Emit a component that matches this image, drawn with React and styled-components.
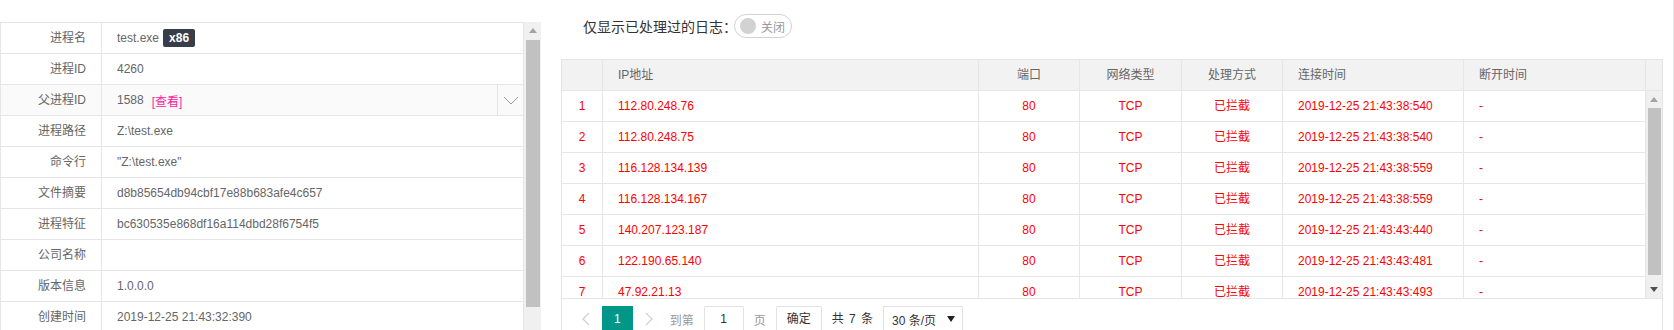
import React from 'react';
import styled, { createGlobalStyle } from 'styled-components';

const GlobalStyle = createGlobalStyle`
  html, body { margin: 0; padding: 0; background: #fff; }
  body {
    font-family: "Liberation Sans", Arial, "Noto Sans CJK SC", sans-serif;
    font-size: 12px;
    color: #666;
  }
  * { box-sizing: border-box; }
`;

const Page = styled.div`
  display: flex;
  align-items: flex-start;
  width: 1674px;
  height: 330px;
  overflow: hidden;
  border-right: 1px solid #e6e6e6;
`;

/* ---------- left info panel ---------- */
const LeftPanel = styled.div`
  display: flex;
  flex-shrink: 0;
  width: 541px;
  margin-top: 22px;
`;

const InfoTable = styled.div`
  width: 524px;
  border: 1px solid #e6e6e6;
  border-bottom: none;
`;

const InfoRow = styled.div`
  display: flex;
  height: 31px;
  border-bottom: 1px solid #e6e6e6;
  background: ${p => (p.$shade ? '#fafafa' : '#fff')};
`;

const InfoLabel = styled.div`
  width: 101px;
  flex-shrink: 0;
  border-right: 1px solid #e6e6e6;
  padding-right: 15px;
  text-align: right;
  line-height: 30px;
  color: #666;
`;

const InfoValue = styled.div`
  flex: 1;
  display: flex;
  align-items: center;
  padding-left: 15px;
  color: #666;
  white-space: pre;
`;

const ExpandCell = styled.div`
  width: 26px;
  flex-shrink: 0;
  border-left: 1px solid #e6e6e6;
  display: flex;
  align-items: center;
  justify-content: center;
`;

const Badge = styled.span`
  display: inline-block;
  height: 18px;
  line-height: 18px;
  padding: 0 6px;
  margin-left: 4px;
  border-radius: 2px;
  background: #393d49;
  color: #fff;
  font-size: 12px;
  font-weight: bold;
`;

const LinkText = styled.span`
  color: #ff1d9c;
  margin-left: 8px;
`;

/* ---------- fake scrollbars ---------- */
const ScrollTrack = styled.div`
  display: flex;
  flex-direction: column;
  flex-shrink: 0;
  width: ${p => p.$w}px;
  height: ${p => p.$h}px;
  background: #f0f0f0;
`;

const ScrollBtn = styled.div`
  height: 17px;
  flex-shrink: 0;
  display: flex;
  align-items: center;
  justify-content: center;
`;

const ScrollThumb = styled.div`
  height: ${p => p.$h}px;
  margin: ${p => p.$top}px 1px 0 2px;
  background: #c1c1c1;
  flex-shrink: 0;
`;

const Spacer = styled.div`
  flex: 1;
`;

const Tri = ({ up, color }) => (
  <svg width="8" height="5" viewBox="0 0 8 5">
    <polygon points={up ? '0,5 8,5 4,0' : '0,0 8,0 4,5'} fill={color} />
  </svg>
);

/* ---------- right panel ---------- */
const RightPanel = styled.div`
  display: flex;
  flex-direction: column;
  flex-shrink: 0;
  width: 1102px;
  margin-left: 20px;
`;

const FilterBar = styled.div`
  display: flex;
  align-items: center;
  height: 52px;
  padding-left: 22px;
  margin-bottom: 7px;
  font-size: 14px;
  color: #333;
`;

const Switch = styled.div`
  display: inline-flex;
  align-items: center;
  height: 24px;
  margin-left: -3px;
  padding: 0 5px;
  border: 1px solid #d2d2d2;
  border-radius: 20px;
  background: #fff;
`;

const Knob = styled.span`
  width: 16px;
  height: 16px;
  border-radius: 50%;
  background: #d2d2d2;
`;

const SwitchText = styled.span`
  width: 25px;
  margin-left: 5px;
  font-size: 12px;
  color: #999;
`;

const TableBox = styled.div`
  border: 1px solid #e6e6e6;
  width: 1102px;
`;

const COLS = '41px 376px 101px 102px 101px 181px 182px';

const HeadRow = styled.div`
  display: grid;
  grid-template-columns: ${COLS} 16px;
  height: 31px;
  background: #f2f2f2;
  border-bottom: 1px solid #e6e6e6;
`;

const Cell = styled.div`
  border-right: ${p => (p.$last ? 'none' : '1px solid #e6e6e6')};
  padding: 0 15px;
  line-height: 30px;
  text-align: ${p => p.$align || 'left'};
  white-space: nowrap;
  overflow: hidden;
`;

const HeadCell = styled(Cell)`
  color: #666;
`;

const BodyCell = styled(Cell)`
  color: #ff0000;
`;

const Body = styled.div`
  display: flex;
  height: 208px;
  border-bottom: 1px solid #e6e6e6;
  overflow: hidden;
`;

const Rows = styled.div`
  width: 1084px;
  flex-shrink: 0;
`;

const DataRow = styled.div`
  display: grid;
  grid-template-columns: ${COLS};
  height: 31px;
  border-bottom: 1px solid #e6e6e6;
  background: ${p => (p.$shade ? '#fafafa' : '#fff')};
`;

const Pager = styled.div`
  display: flex;
  align-items: flex-start;
  height: 41px;
  padding: 7px 7px 0;
  font-size: 12px;
`;

const PageArrow = styled.div`
  display: flex;
  align-items: center;
  height: 26px;
  padding: 0 12px;
  margin-right: -1px;
`;

const PageCurrent = styled.div`
  height: 26px;
  line-height: 26px;
  padding: 0 12px;
  margin-right: -1px;
  background: #009688;
  color: #fff;
`;

const Skip = styled.div`
  display: flex;
  align-items: center;
  height: 26px;
  margin-left: 5px;
  color: #999;
`;

const PageInput = styled.div`
  width: 40px;
  height: 26px;
  line-height: 24px;
  margin: 0 10px;
  border: 1px solid #e2e2e2;
  border-radius: 2px;
  text-align: center;
  color: #333;
`;

const ConfirmBtn = styled.div`
  height: 26px;
  line-height: 24px;
  margin-left: 10px;
  padding: 0 10px;
  border: 1px solid #e2e2e2;
  border-radius: 2px;
  color: #333;
`;

const Count = styled.div`
  height: 26px;
  line-height: 26px;
  margin-left: 10px;
  color: #333;
  word-spacing: 2px;
`;

const Limits = styled.div`
  display: flex;
  align-items: center;
  justify-content: space-between;
  width: 80px;
  height: 26px;
  margin-left: 10px;
  padding: 0 7px 0 8px;
  border: 1px solid #e2e2e2;
  color: #333;
`;

const Chevron = ({ dir, color }) => {
  const pts = {
    left: '8,1 2,7 8,13',
    right: '2,1 8,7 2,13',
  }[dir];
  return (
    <svg width="10" height="14" viewBox="0 0 10 14">
      <polyline points={pts} fill="none" stroke={color} strokeWidth="1.3" />
    </svg>
  );
};

const DownChevron = () => (
  <svg width="16" height="9" viewBox="0 0 16 9">
    <polyline points="1,1 8,8 15,1" fill="none" stroke="#999" strokeWidth="1" />
  </svg>
);

const info = [
  { label: '进程名', value: 'test.exe', badge: 'x86' },
  { label: '进程ID', value: '4260' },
  { label: '父进程ID', value: '1588', link: '[查看]', expand: true },
  { label: '进程路径', value: 'Z:\\test.exe' },
  { label: '命令行', value: '"Z:\\test.exe"' },
  { label: '文件摘要', value: 'd8b85654db94cbf17e88b683afe4c657' },
  { label: '进程特征', value: 'bc630535e868df16a114dbd28f6754f5' },
  { label: '公司名称', value: '' },
  { label: '版本信息', value: '1.0.0.0' },
  { label: '创建时间', value: '2019-12-25 21:43:32:390' },
];

const conns = [
  ['112.80.248.76', '2019-12-25 21:43:38:540'],
  ['112.80.248.75', '2019-12-25 21:43:38:540'],
  ['116.128.134.139', '2019-12-25 21:43:38:559'],
  ['116.128.134.167', '2019-12-25 21:43:38:559'],
  ['140.207.123.187', '2019-12-25 21:43:43:440'],
  ['122.190.65.140', '2019-12-25 21:43:43:481'],
  ['47.92.21.13', '2019-12-25 21:43:43:493'],
];

const headers = [
  { t: '', a: 'center' },
  { t: 'IP地址', a: 'left' },
  { t: '端口', a: 'center' },
  { t: '网络类型', a: 'center' },
  { t: '处理方式', a: 'center' },
  { t: '连接时间', a: 'left' },
  { t: '断开时间', a: 'left' },
];

export default function App() {
  return (
    <>
      <GlobalStyle />
      <Page>
        <LeftPanel>
          <InfoTable>
            {info.map(r => (
              <InfoRow key={r.label} $shade={r.expand}>
                <InfoLabel>{r.label}</InfoLabel>
                <InfoValue>
                  {r.value}
                  {r.badge && <Badge>{r.badge}</Badge>}
                  {r.link && <LinkText>{r.link}</LinkText>}
                </InfoValue>
                {r.expand && (
                  <ExpandCell>
                    <DownChevron />
                  </ExpandCell>
                )}
              </InfoRow>
            ))}
          </InfoTable>
          <ScrollTrack $w={17} $h={320}>
            <ScrollBtn>
              <Tri up color="#a3a3a3" />
            </ScrollBtn>
            <ScrollThumb $h={267} $top={1} />
          </ScrollTrack>
        </LeftPanel>

        <RightPanel>
          <FilterBar>
            仅显示已处理过的日志：
            <Switch>
              <Knob />
              <SwitchText>关闭</SwitchText>
            </Switch>
          </FilterBar>
          <TableBox>
            <HeadRow>
              {headers.map((h, i) => (
                <HeadCell key={i} $align={h.a}>
                  {h.t}
                </HeadCell>
              ))}
              <HeadCell $last />
            </HeadRow>
            <Body>
              <Rows>
                {conns.map((c, i) => (
                  <DataRow key={i}>
                    <BodyCell $align="center">{i + 1}</BodyCell>
                    <BodyCell>{c[0]}</BodyCell>
                    <BodyCell $align="center">80</BodyCell>
                    <BodyCell $align="center">TCP</BodyCell>
                    <BodyCell $align="center">已拦截</BodyCell>
                    <BodyCell>{c[1]}</BodyCell>
                    <BodyCell>-</BodyCell>
                  </DataRow>
                ))}
              </Rows>
              <ScrollTrack $w={16} $h={207}>
                <ScrollBtn>
                  <Tri up color="#a3a3a3" />
                </ScrollBtn>
                <ScrollThumb $h={167} $top={0} />
                <Spacer />
                <ScrollBtn>
                  <Tri color="#505050" />
                </ScrollBtn>
              </ScrollTrack>
            </Body>
            <Pager>
              <PageArrow>
                <Chevron dir="left" color="#d2d2d2" />
              </PageArrow>
              <PageCurrent>1</PageCurrent>
              <PageArrow>
                <Chevron dir="right" color="#d2d2d2" />
              </PageArrow>
              <Skip>
                到第
                <PageInput>1</PageInput>
                页
                <ConfirmBtn>确定</ConfirmBtn>
              </Skip>
              <Count>共 7 条</Count>
              <Limits>
                <span>30 条/页</span>
                <svg width="8" height="6" viewBox="0 0 8 6">
                  <polygon points="0,0 8,0 4,6" fill="#222" />
                </svg>
              </Limits>
            </Pager>
          </TableBox>
        </RightPanel>
      </Page>
    </>
  );
}
